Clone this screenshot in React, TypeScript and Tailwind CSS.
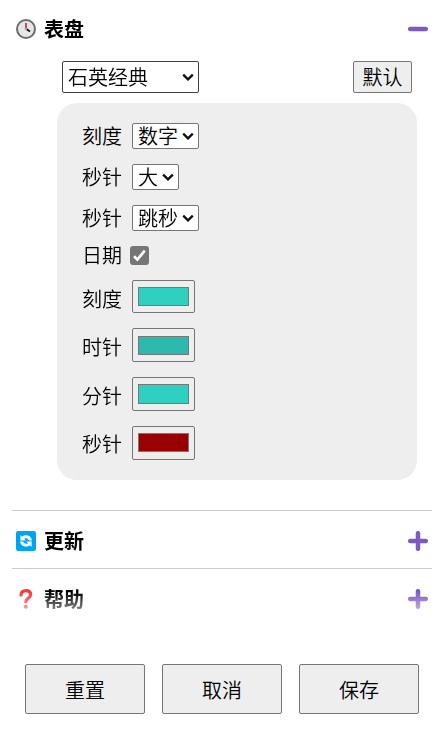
import React from "react";

function Chevron({ className }: { className: string }) {
  return (
    <svg viewBox="0 0 12 8" className={`pointer-events-none col-start-1 row-start-1 h-[8px] w-[12px] self-center justify-self-end ${className}`}>
      <path d="M1.2 1.6 L6 6.4 L10.8 1.6" fill="none" stroke="#101010" strokeWidth="2.3" />
    </svg>
  );
}

function Select({ options, label, box, arrow }: { options: string[]; label: string; box: string; arrow: string }) {
  return (
    <span className={`grid ${box}`}>
      <select
        aria-label={label}
        className="col-start-1 row-start-1 h-full w-full appearance-none rounded-[2px] border border-inherit bg-white pl-[5px] leading-[22px] text-black outline-none"
      >
        {options.map((o) => (
          <option key={o}>{o}</option>
        ))}
      </select>
      <Chevron className={arrow} />
    </span>
  );
}

function Row({ label, className, labelClass = "", children }: { label: string; className: string; labelClass?: string; children: React.ReactNode }) {
  return (
    <div className={`flex items-center ${className}`}>
      <span className={`w-[50px] leading-[24px] ${labelClass}`}>{label}</span>
      {children}
    </div>
  );
}

function Swatch({ color, box = "h-[34px]", inner = "h-[19px]" }: { color: string; box?: string; inner?: string }) {
  return (
    <button className={`flex w-[63px] items-start justify-center rounded-[2px] border border-[#767676] bg-[#eeeeee] ${box}`}>
      <span className={`w-[51px] border border-[#777777] ${inner} ${color}`} />
    </button>
  );
}

function ClockIcon() {
  return (
    <svg viewBox="0 0 20 20" className="h-[20px] w-[20px]">
      <circle cx="10" cy="10" r="9" fill="#e6e6e6" stroke="#6c6c6c" strokeWidth="2" />
      <path d="M10 4V10" stroke="#d81b60" strokeWidth="1.7" />
      <path d="M10 9.8L14 12.6" stroke="#111" strokeWidth="1.8" />
      <circle cx="9.8" cy="10" r="1.2" fill="#aaa" />
    </svg>
  );
}

function RefreshIcon() {
  return (
    <svg viewBox="0 0 20 20" className="h-[20px] w-[20px]">
      <rect width="20" height="20" rx="2.2" fill="#00a4ef" />
      <path d="M4.4 4V9.5H9.8L8 7.7C9.6 6.7 11.6 7 13.1 9.4H16C15.2 4.4 9.6 2.8 6.1 5.7Z" fill="#fff" />
      <path d="M15.6 16V10.5H10.2L12 12.3C10.4 13.3 8.4 13 6.9 10.6H4C4.8 15.6 10.4 17.2 13.9 14.3Z" fill="#fff" />
    </svg>
  );
}

function QuestionIcon() {
  return (
    <svg viewBox="0 0 20 20" className="h-[20px] w-[20px]">
      <path d="M5 6C5 3.2 6.9 1.7 9.8 1.7C12.8 1.7 14.6 3.4 14.6 6C14.6 9.2 9.8 9 9.8 12.8" fill="none" stroke="#fa3838" strokeWidth="3.3" strokeLinecap="round" />
      <circle cx="9.8" cy="17.7" r="2" fill="#fa3838" />
    </svg>
  );
}

function Header({ icon, title, open, className }: { icon: React.ReactNode; title: string; open?: boolean; className: string }) {
  return (
    <div className={`flex items-center pr-1 pl-1 ${className}`}>
      {icon}
      <h2 className="ml-[8px] flex-1 text-[20px] leading-[24px] font-bold">{title}</h2>
      <svg viewBox="0 0 20 20" className="h-[20px] w-[20px]">
        <path d={open ? "M2.2 10H17.8" : "M2.2 10H17.8M10 2.2V17.8"} stroke="#7b5ac5" strokeWidth="4.5" strokeLinecap="round" />
      </svg>
    </div>
  );
}

export default function App() {
  return (
    <div className="flex h-[743px] w-[442px] flex-col overflow-hidden bg-white font-['Noto_Sans_CJK_SC',sans-serif] text-[20px] font-[350] text-black">
      <div className="flex h-[626px] flex-col px-[12px] pr-[10px] [mask-image:linear-gradient(to_bottom,#000_592px,transparent_626px)]">
        <Header icon={<ClockIcon />} title="表盘" open className="mt-[9px] h-[40px]" />

        <div className="mt-[12px] mr-[20px] ml-[50px] flex justify-between">
          <Select options={["石英经典"]} label="表盘样式" box="h-[32px] w-[137px] border-[#3e3e3e]" arrow="mr-[5px]" />
          <button className="h-[32px] w-[59px] rounded-[2px] border border-[#767676] bg-[#eeeeee] leading-[28px]">默认</button>
        </div>

        <div className="mt-[10px] ml-[45px] flex h-[377px] w-[360px] shrink-0 flex-col rounded-[20px] bg-[#eeeeee] pt-[20px] pl-[25px]">
          <Row label="刻度" className="h-[26px]">
            <Select options={["数字"]} label="刻度" box="h-[26px] w-[67px] border-[#767676]" arrow="mr-[5px]" />
          </Row>
          <Row label="秒针" className="mt-[15px] h-[26px]">
            <Select options={["大"]} label="秒针大小" box="h-[26px] w-[47px] border-[#767676]" arrow="mr-[5px]" />
          </Row>
          <Row label="秒针" className="mt-[15px] h-[26px]">
            <Select options={["跳秒"]} label="秒针走法" box="h-[26px] w-[67px] border-[#767676]" arrow="mr-[5px]" />
          </Row>
          <Row label="日期" className="mt-[15px] h-[19px]" labelClass="pb-[1px]">
            <span role="checkbox" aria-checked="true" className="-ml-[2px] h-[19px] w-[19px] rounded-[3px] bg-[#767676]">
              <svg viewBox="0 0 19 19" className="h-[19px] w-[19px]">
                <path d="M4 10.2L7.4 13.6L14.8 4.6" fill="none" stroke="#fff" strokeWidth="2.7" />
              </svg>
            </span>
          </Row>
          <Row label="刻度" className="mt-[15px] h-[33px]" labelClass="pt-[5px]">
            <Swatch color="bg-[#30d0c0]" box="h-[33px] pt-[6px]" />
          </Row>
          <Row label="时针" className="mt-[15px] h-[34px]" labelClass="pt-[4px]">
            <Swatch color="bg-[#2dbaac]" box="h-[34px] pt-[7px]" />
          </Row>
          <Row label="分针" className="mt-[15px] h-[34px]" labelClass="pt-[4px]">
            <Swatch color="bg-[#30d0c0]" box="h-[34px] pt-[6px]" inner="h-[20px]" />
          </Row>
          <Row label="秒针" className="mt-[15px] h-[34px]" labelClass="pt-[2px]">
            <Swatch color="bg-[#990000]" box="h-[34px] pt-[6px]" />
          </Row>
        </div>

        <Header icon={<RefreshIcon />} title="更新" className="mt-[30px] h-[58px] shrink-0 border-t border-[#cccccc] pt-[3px]" />
        <Header icon={<QuestionIcon />} title="帮助" className="h-[58px] shrink-0 border-t border-[#cccccc] pt-[3px]" />
      </div>

      <div className="mt-[38px] ml-[25px] flex gap-[17px]">
        <button className="h-[50px] w-[120px] rounded-[2px] border border-[#767676] bg-[#eeeeee] pt-[1px]">重置</button>
        <button className="h-[50px] w-[120px] rounded-[2px] border border-[#767676] bg-[#eeeeee] pt-[1px]">取消</button>
        <button className="h-[50px] w-[120px] rounded-[2px] border border-[#767676] bg-[#eeeeee] pt-[1px]">保存</button>
      </div>
    </div>
  );
}
